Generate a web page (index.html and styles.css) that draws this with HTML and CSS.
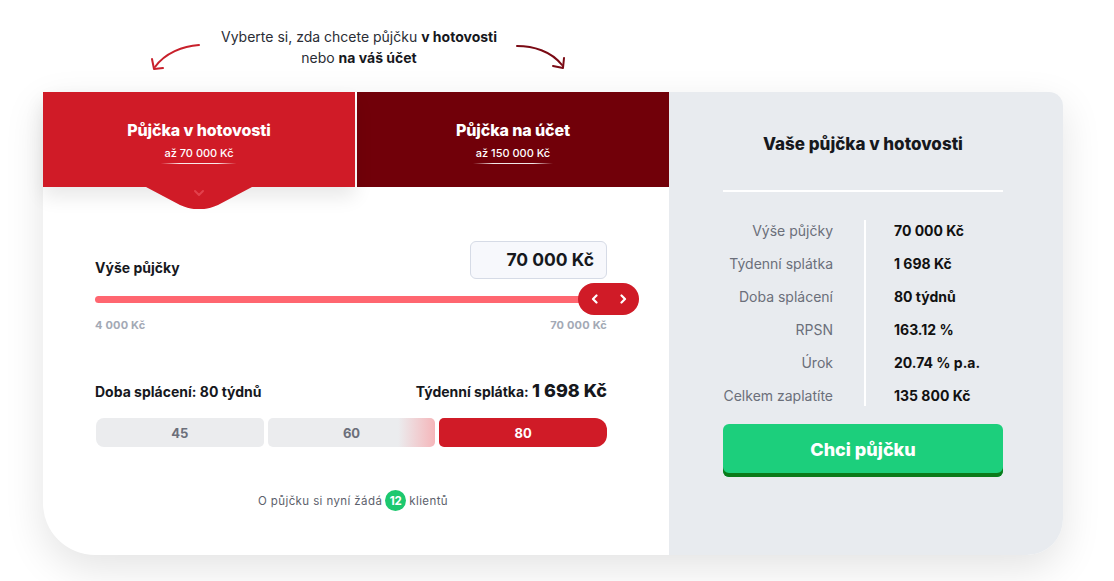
FILE: index.html
```html
<!DOCTYPE html>
<html lang="cs">
<head>
<meta charset="utf-8">
<title>Kalkulačka půjčky</title>
<link rel="stylesheet" href="styles.css">
</head>
<body>
<div class="page">
  <header class="intro">
    <svg class="arrow arrow-left" width="60" height="36" viewBox="0 0 60 36">
      <path d="M52 4 C36 5 18 12 8 26" fill="none" stroke="#c8202b" stroke-width="2" stroke-linecap="round"/>
      <path d="M5 18 L7 28 L16 27" fill="none" stroke="#c8202b" stroke-width="2" stroke-linecap="round" stroke-linejoin="round"/>
    </svg>
    <p class="intro-text">Vyberte si, zda chcete půjčku <b>v hotovosti</b><br>nebo <b>na váš účet</b></p>
    <svg class="arrow arrow-right" width="60" height="36" viewBox="0 0 60 36">
      <path d="M6 5 C22 5 40 10 51 24" fill="none" stroke="#7a0a14" stroke-width="2" stroke-linecap="round"/>
      <path d="M42 25 L52 27 L53 17" fill="none" stroke="#7a0a14" stroke-width="2" stroke-linecap="round" stroke-linejoin="round"/>
    </svg>
  </header>

  <main class="card">
    <section class="calc">
      <div class="tabs">
        <div class="tab tab-active">
          <div class="tab-title">Půjčka v hotovosti</div>
          <div class="tab-sub">až 70 000 Kč</div>
          <svg class="tab-pointer" width="106" height="22" viewBox="0 0 106 22">
            <path d="M0 0 H106 L72 18 Q60 23 53 22 Q46 23 34 18 Z" fill="#d01b27"/>
            <path d="M49 4 L53 8 L57 4" fill="none" stroke="#e2414c" stroke-width="2" stroke-linecap="round" stroke-linejoin="round"/>
          </svg>
        </div>
        <div class="tab tab-dark">
          <div class="tab-title">Půjčka na účet</div>
          <div class="tab-sub">až 150 000 Kč</div>
        </div>
      </div>

      <div class="calc-body">
        <div class="amount-row">
          <span class="label">Výše půjčky</span>
          <div class="amount-box">70 000 Kč</div>
        </div>
        <div class="slider">
          <div class="track"></div>
          <div class="handle">
            <svg width="10" height="10" viewBox="0 0 10 10"><path d="M6.5 1.5 L3 5 L6.5 8.5" fill="none" stroke="#fff" stroke-width="2.2" stroke-linecap="round" stroke-linejoin="round"/></svg>
            <svg width="10" height="10" viewBox="0 0 10 10"><path d="M3.5 1.5 L7 5 L3.5 8.5" fill="none" stroke="#fff" stroke-width="2.2" stroke-linecap="round" stroke-linejoin="round"/></svg>
          </div>
        </div>
        <div class="range-labels">
          <span>4 000 Kč</span>
          <span>70 000 Kč</span>
        </div>

        <div class="term-row">
          <span class="label">Doba splácení: 80 týdnů</span>
          <span class="label">Týdenní splátka: <span class="big">1 698 Kč</span></span>
        </div>
        <div class="segments">
          <div class="seg">45</div>
          <div class="seg seg-fade">60</div>
          <div class="seg seg-active">80</div>
        </div>

        <p class="count">O půjčku si nyní žádá <span class="badge">12</span> klientů</p>
      </div>
    </section>

    <aside class="summary">
      <h2 class="summary-title">Vaše půjčka v hotovosti</h2>
      <div class="divider"></div>
      <div class="table">
        <div class="col-labels">
          <span>Výše půjčky</span>
          <span>Týdenní splátka</span>
          <span>Doba splácení</span>
          <span>RPSN</span>
          <span>Úrok</span>
          <span>Celkem zaplatíte</span>
        </div>
        <div class="col-values">
          <span>70 000 Kč</span>
          <span>1 698 Kč</span>
          <span>80 týdnů</span>
          <span>163.12 %</span>
          <span>20.74 % p.a.</span>
          <span>135 800 Kč</span>
        </div>
      </div>
      <button class="cta">Chci půjčku</button>
    </aside>
  </main>
</div>
</body>
</html>
```

FILE: styles.css
```css
* { box-sizing: border-box; }
html, body { margin: 0; padding: 0; background: #fff; }
body {
  font-family: Inter, "Noto Sans", "Liberation Sans", sans-serif;
  color: #16181d;
  width: 1114px;
  height: 581px;
  overflow: hidden;
}
.page { padding-left: 43px; }

.intro {
  width: 626px;
  height: 92px;
  display: flex;
  justify-content: center;
  align-items: flex-start;
  gap: 14px;
}
.arrow { margin-top: 41px; }
.arrow-left { margin-left: 0; }
.arrow-right { margin-right: -6px; }
.intro-text {
  margin: 26px 0 0;
  font-size: 14px;
  line-height: 21px;
  text-align: center;
  color: #2a2d35;
  font-weight: 400;
}
.intro-text b { font-weight: 700; color: #16181d; }

.card {
  width: 1020px;
  height: 463px;
  display: grid;
  grid-template-columns: 626px 394px;
  background: #fff;
  border-radius: 0 14px 36px 52px;
  box-shadow: 0 14px 40px rgba(0, 0, 0, 0.11);
}

.calc { display: flex; flex-direction: column; border-bottom-left-radius: 52px; }
.tabs { display: flex; gap: 2px; height: 95px; }
.tab {
  flex: 1;
  color: #fff;
  display: flex;
  flex-direction: column;
  align-items: center;
  justify-content: center;
  padding-top: 4px;
  position: relative;
}
.tab-active { background: #d01b27; box-shadow: 0 10px 18px rgba(0, 0, 0, 0.09); z-index: 1; }
.tab-dark { background: #710009; }
.tab-title { font-size: 16px; font-weight: 800; letter-spacing: -0.1px; }
.tab-sub {
  font-size: 11px;
  font-weight: 500;
  margin-top: 6px;
  padding: 0 3px 4px;
  background: linear-gradient(90deg, rgba(255,255,255,0), rgba(255,255,255,0.9) 25%, rgba(255,255,255,0.9) 75%, rgba(255,255,255,0)) bottom / 100% 1px no-repeat;
}
.tab-pointer { position: absolute; left: 103px; top: 95px; }

.calc-body { padding: 54px 62px 0 52px; display: flex; flex-direction: column; }
.amount-row { display: flex; justify-content: space-between; align-items: flex-end; }
.label { font-size: 14px; font-weight: 700; color: #16181d; }
.amount-row .label { padding-bottom: 3px; }
.amount-box {
  width: 137px;
  height: 38px;
  border: 1px solid #d6dbe6;
  background: #f7f8fc;
  border-radius: 6px;
  font-size: 17.5px;
  font-weight: 700;
  text-align: right;
  padding: 7px 12px 0 0;
}
.slider { position: relative; height: 32px; margin-top: 4px; display: flex; align-items: center; }
.track { width: 515px; height: 7px; background: #ff6670; border-radius: 4px; }
.handle {
  position: absolute;
  left: 483px;
  top: 0;
  width: 61px;
  height: 32px;
  border-radius: 16px;
  background: #d01b27;
  display: flex;
  align-items: center;
  justify-content: center;
  gap: 18px;
}
.range-labels {
  display: flex;
  justify-content: space-between;
  font-size: 11px;
  font-weight: 700;
  letter-spacing: 0.2px;
  color: #a3a9b5;
  margin-top: 3px;
}
.term-row {
  display: flex;
  justify-content: space-between;
  align-items: baseline;
  margin-top: 48px;
}
.big { font-size: 18px; font-weight: 800; }
.segments { display: flex; gap: 4px; margin-top: 17px; padding-left: 1px; }
.seg {
  flex: 1;
  height: 29px;
  background: #ebecee;
  border-radius: 5px;
  display: flex;
  align-items: center;
  justify-content: center;
  font-size: 13px;
  font-weight: 700;
  color: #6b6f7a;
}
.seg:first-child { border-radius: 8px 5px 5px 8px; }
.seg-fade { background: linear-gradient(90deg, #ebecee 0%, #ebecee 78%, #f5b6ba 100%); }
.seg-active { background: #d01b27; color: #fff; border-radius: 5px 12px 12px 5px; }
.count {
  margin: 43px 0 0;
  text-align: center;
  font-size: 11.5px;
  letter-spacing: 0.4px;
  color: #5d616c;
  display: flex;
  align-items: center;
  justify-content: center;
  gap: 3px;
  padding-left: 4px;
}
.badge {
  width: 21px;
  height: 21px;
  border-radius: 50%;
  background: #1dc86f;
  color: #fff;
  font-weight: 700;
  font-size: 11.5px;
  letter-spacing: 0;
  display: inline-flex;
  align-items: center;
  justify-content: center;
}

.summary {
  background: #e8ebef;
  border-radius: 0 14px 36px 0;
  padding: 0 60px 0 54px;
  display: flex;
  flex-direction: column;
}
.summary-title {
  margin: 41px 0 0;
  text-align: center;
  font-size: 17px;
  font-weight: 800;
  line-height: 22px;
}
.divider { height: 2px; background: #fff; margin-top: 35px; }
.table { display: flex; margin-top: 28px; }
.col-labels, .col-values { display: flex; flex-direction: column; gap: 12px; font-size: 14px; line-height: 21px; white-space: nowrap; }
.col-labels {
  width: 143px;
  flex: none;
  align-items: flex-end;
  color: #6b6f7a;
  padding-right: 31px;
  border-right: 2px solid #fff;
}
.col-values { padding-left: 28px; font-weight: 700; color: #111; }
.cta {
  margin-top: 18px;
  height: 53px;
  width: 280px;
  border: none;
  border-radius: 6px;
  background: #1ccf7c;
  box-shadow: inset 0 -4px 0 #0b7a1a;
  color: #fff;
  font-family: inherit;
  font-size: 18px;
  font-weight: 800;
  padding-bottom: 4px;
}
```
